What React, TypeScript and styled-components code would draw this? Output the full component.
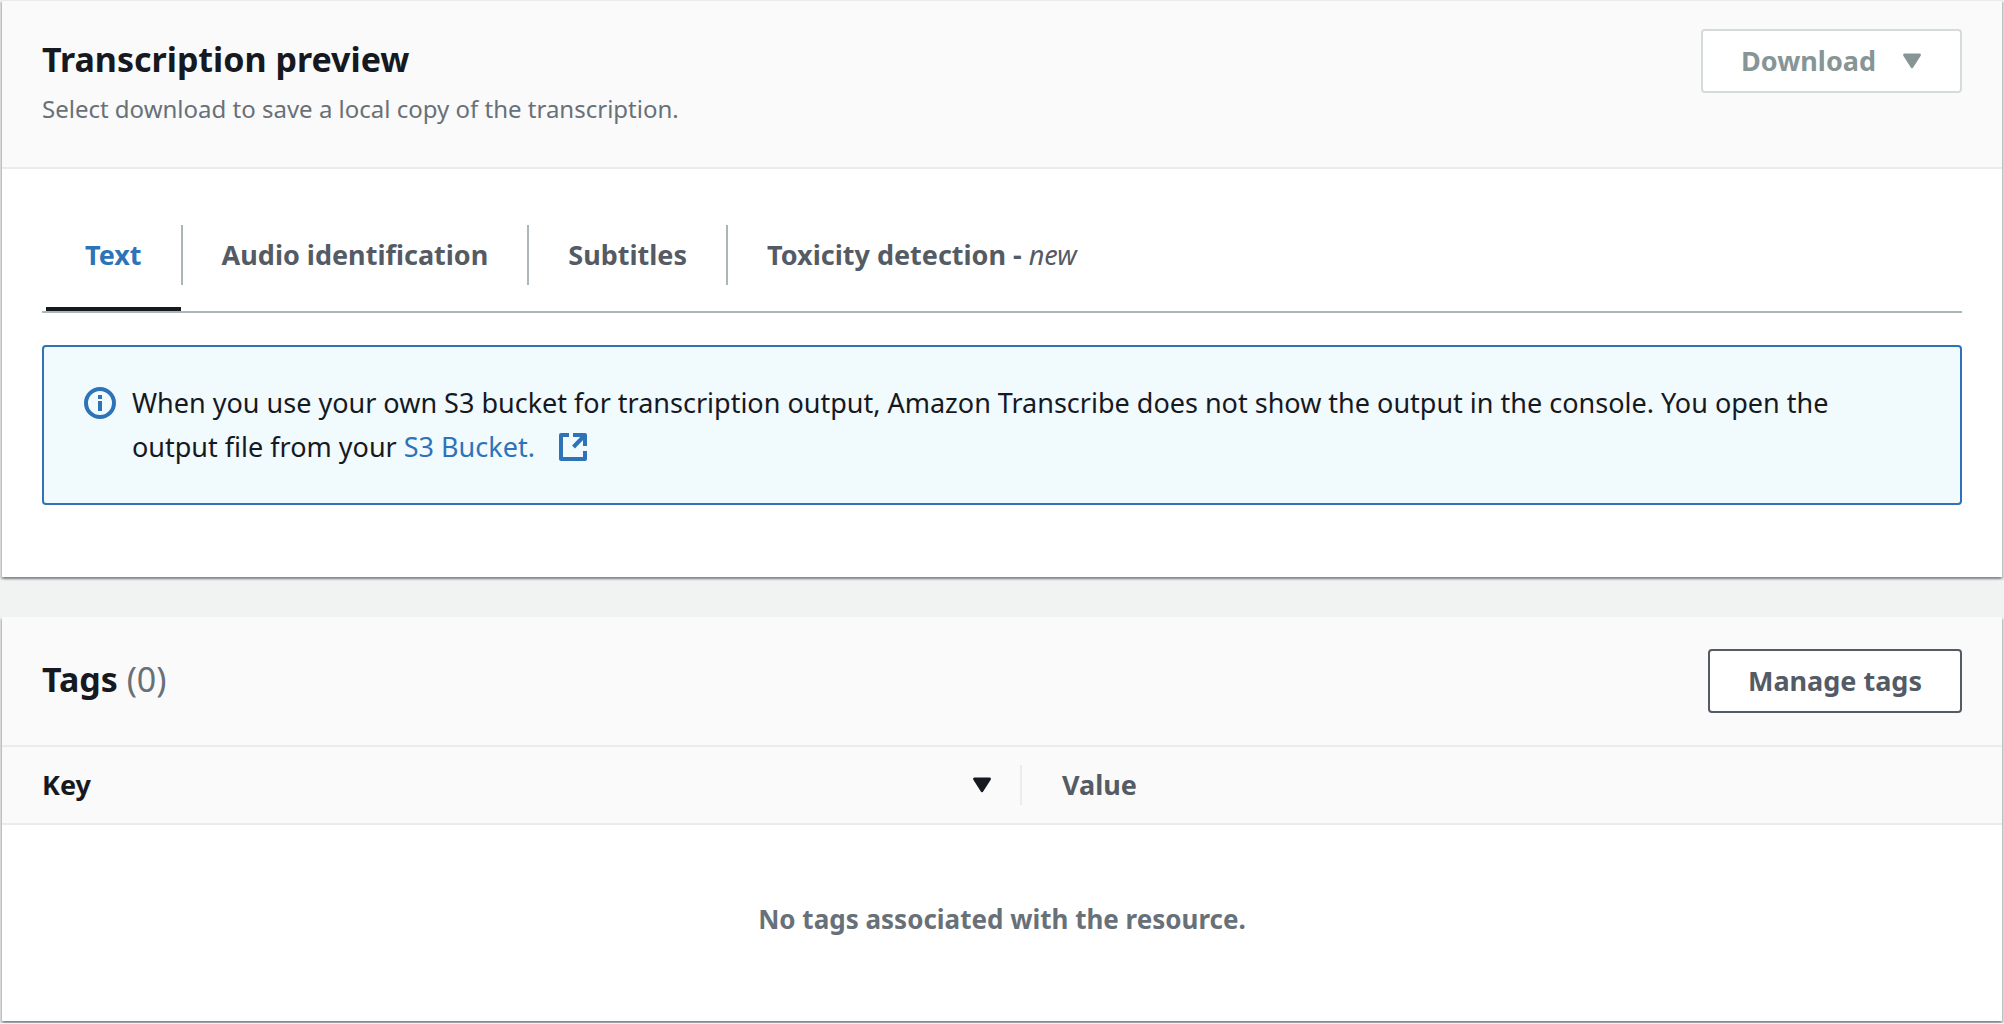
import React, { useState } from 'react';
import styled, { createGlobalStyle } from 'styled-components';

const color = {
  page: '#f1f3f3',
  surface: '#ffffff',
  header: '#fafafa',
  divider: '#eaebeb',
  line: '#aab7b8',
  ink: '#16191f',
  inkSoft: '#545b64',
  inkMuted: '#687078',
  disabled: '#879596',
  disabledLine: '#d5dbdb',
  link: '#2e73b8',
  infoSurface: '#f1fafd',
};

const GlobalStyle = createGlobalStyle`
  *, *::before, *::after {
    box-sizing: border-box;
  }
  body {
    margin: 0;
    background: ${color.page};
    color: ${color.ink};
    font-family: "Noto Sans", "Open Sans", sans-serif;
    font-size: 27px;
    line-height: 44px;
  }
  button {
    font-family: inherit;
    font-size: inherit;
    line-height: inherit;
    cursor: pointer;
  }
`;

const Page = styled.main`
  display: flex;
  flex-direction: column;
  gap: 40px;
  padding: 0 2px 2px;
`;

const Card = styled.section`
  background: ${color.surface};
  border-top: 1px solid ${color.divider};
  box-shadow:
    0 2px 2px 0 rgba(0, 28, 36, 0.3),
    2px 2px 2px 0 rgba(0, 28, 36, 0.15),
    -2px 2px 2px 0 rgba(0, 28, 36, 0.15);

  & + & {
    border-top-color: ${color.header};
  }
`;

const CardHeader = styled.header<{ $compact?: boolean }>`
  display: flex;
  justify-content: space-between;
  align-items: flex-start;
  gap: 40px;
  padding: ${(p) => (p.$compact ? '31px 40px 32px' : '28px 40px 38px')};
  background: ${color.header};
  border-bottom: 2px solid ${color.divider};
`;

const Heading = styled.div`
  padding-top: 8px;
`;

const Title = styled.h2`
  margin: 0;
  font-size: 34px;
  font-weight: 700;
`;

const Counter = styled.span`
  color: ${color.inkMuted};
  font-weight: 400;
`;

const Description = styled.p`
  margin: 8px 0 0;
  color: ${color.inkMuted};
  font-size: 24px;
  line-height: 40px;
`;

const Button = styled.button`
  display: inline-flex;
  align-items: center;
  gap: 26px;
  height: 64px;
  padding: 0 38px;
  border: 2px solid ${color.inkSoft};
  border-radius: 4px;
  background: ${color.surface};
  color: ${color.inkSoft};
  font-weight: 700;
  white-space: nowrap;

  &:disabled {
    border-color: ${color.disabledLine};
    color: ${color.disabled};
    cursor: default;
  }
`;

const CardBody = styled.div`
  padding: 30px 40px 72px;
`;

const TabList = styled.div`
  display: flex;
  padding-left: 4px;
  border-bottom: 2px solid ${color.line};
`;

const TabSlot = styled.div`
  display: flex;
  align-items: center;

  &:not(:last-child)::after {
    content: '';
    width: 2px;
    height: 60px;
    background: ${color.line};
  }
`;

const Tab = styled.button<{ $active: boolean }>`
  height: 112px;
  padding: 0 39px;
  border: solid transparent;
  border-width: 4px 0;
  border-bottom-color: ${(p) => (p.$active ? color.ink : 'transparent')};
  background: none;
  color: ${(p) => (p.$active ? color.link : color.inkSoft)};
  font-weight: 700;
  white-space: nowrap;

  em {
    font-weight: 400;
  }
`;

const Alert = styled.div`
  display: flex;
  gap: 16px;
  margin-top: 32px;
  padding: 34px 48px 34px 40px;
  border: 2px solid ${color.link};
  border-radius: 4px;
  background: ${color.infoSurface};
`;

const AlertIcon = styled.span`
  display: flex;
  align-items: center;
  flex: none;
  height: 44px;
  color: ${color.link};
`;

const AlertText = styled.p`
  margin: 0;
`;

const Link = styled.a`
  color: ${color.link};
  text-decoration: none;

  svg {
    margin-left: 24px;
    vertical-align: -4px;
  }
`;

const Table = styled.table`
  width: 100%;
  border-collapse: separate;
  border-spacing: 0;
  table-layout: fixed;
`;

const HeadCell = styled.th`
  padding: 18px 0;
  background: ${color.header};
  border-bottom: 2px solid ${color.divider};
  font-weight: 700;
  text-align: left;

  &:first-child {
    width: 51%;
  }
`;

const HeadContent = styled.div<{ $divided?: boolean }>`
  display: flex;
  height: 40px;
  border-right: ${(p) => (p.$divided ? `2px solid ${color.divider}` : '0')};
  color: ${color.inkSoft};
  line-height: 40px;
`;

const SortButton = styled.button`
  display: flex;
  flex: 1;
  align-items: center;
  justify-content: space-between;
  padding: 0 28px 0 40px;
  border: 0;
  background: none;
  color: ${color.ink};
  font-weight: 700;
`;

const HeadLabel = styled.span`
  padding: 0 40px;
`;

const EmptyCell = styled.td`
  padding: 72px 40px 80px;
  color: ${color.inkMuted};
  font-size: 26px;
  font-weight: 700;
  text-align: center;
`;

const CaretDown = () => (
  <svg width="20" height="16" viewBox="0 0 20 16" aria-hidden="true">
    <path
      d="M2 2H18L10 14Z"
      fill="currentColor"
      stroke="currentColor"
      strokeWidth="3"
      strokeLinejoin="round"
      transform="translate(.6 0) scale(.94 .98)"
    />
  </svg>
);

const InfoIcon = () => (
  <svg width="32" height="32" viewBox="0 0 32 32" aria-hidden="true">
    <circle cx="16" cy="16" r="14" fill="none" stroke="currentColor" strokeWidth="4" />
    <path d="M16 8V12M16 14V24" stroke="currentColor" strokeWidth="4" />
  </svg>
);

const ExternalIcon = () => (
  <svg width="28" height="28" viewBox="0 0 28 28" aria-hidden="true">
    <path
      d="M10 2H2V26H26V18M14 2H26V13M26 2L14.5 14"
      fill="none"
      stroke="currentColor"
      strokeWidth="4"
      strokeLinejoin="round"
    />
  </svg>
);

const tabs: { id: string; label: React.ReactNode }[] = [
  { id: 'text', label: 'Text' },
  { id: 'audio', label: 'Audio identification' },
  { id: 'subtitles', label: 'Subtitles' },
  {
    id: 'toxicity',
    label: (
      <>
        Toxicity detection - <em>new</em>
      </>
    ),
  },
];

export default function App() {
  const [active, setActive] = useState('text');

  return (
    <>
      <GlobalStyle />
      <Page>
        <Card>
          <CardHeader>
            <Heading>
              <Title>Transcription preview</Title>
              <Description>Select download to save a local copy of the transcription.</Description>
            </Heading>
            <Button type="button" disabled>
              Download
              <CaretDown />
            </Button>
          </CardHeader>
          <CardBody>
            <TabList role="tablist">
              {tabs.map((tab) => (
                <TabSlot key={tab.id} role="presentation">
                  <Tab
                    type="button"
                    role="tab"
                    aria-selected={active === tab.id}
                    $active={active === tab.id}
                    onClick={() => setActive(tab.id)}
                  >
                    {tab.label}
                  </Tab>
                </TabSlot>
              ))}
            </TabList>
            <Alert>
              <AlertIcon>
                <InfoIcon />
              </AlertIcon>
              <AlertText>
                When you use your own S3 bucket for transcription output, Amazon Transcribe does not
                show the output in the console. You open the output file from your{' '}
                <Link href="#s3-bucket">
                  S3 Bucket.
                  <ExternalIcon />
                </Link>
              </AlertText>
            </Alert>
          </CardBody>
        </Card>

        <Card>
          <CardHeader $compact>
            <Heading>
              <Title>
                Tags <Counter>(0)</Counter>
              </Title>
            </Heading>
            <Button type="button">Manage tags</Button>
          </CardHeader>
          <Table>
            <thead>
              <tr>
                <HeadCell scope="col">
                  <HeadContent $divided>
                    <SortButton type="button">
                      Key
                      <CaretDown />
                    </SortButton>
                  </HeadContent>
                </HeadCell>
                <HeadCell scope="col">
                  <HeadContent>
                    <HeadLabel>Value</HeadLabel>
                  </HeadContent>
                </HeadCell>
              </tr>
            </thead>
            <tbody>
              <tr>
                <EmptyCell colSpan={2}>No tags associated with the resource.</EmptyCell>
              </tr>
            </tbody>
          </Table>
        </Card>
      </Page>
    </>
  );
}
